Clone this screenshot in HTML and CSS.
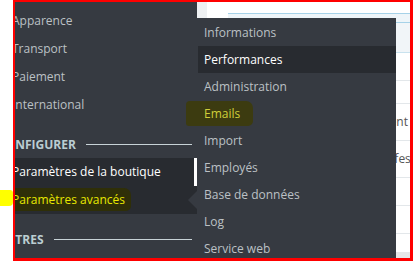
FILE: index.html
```html
<!DOCTYPE html>
<html>
<head>
  <meta name="viewport" content="width=device-width, initial-scale=1.0">
  <title>Paramètres avancés</title>
  <link rel="stylesheet" href="styles.css">
</head>
<body>
  <div class="shot">
    <div class="gutter"><span class="marker"></span></div>
    <div class="screen">
      <nav class="sidebar">
        <div class="sidebar-inner">
          <ul class="menu">
            <li class="item">Apparence</li>
            <li class="item">Transport</li>
            <li class="item">Paiement</li>
            <li class="item">International</li>
          </ul>
          <div class="section">Configurer</div>
          <ul class="menu">
            <li class="item item-current">Paramètres de la boutique</li>
            <li class="item item-open"><span class="hl hl-dark">Paramètres avancés</span></li>
          </ul>
          <div class="section">Autres</div>
        </div>
      </nav>

      <main class="content">
        <div class="strip"></div>
        <div class="spacer"></div>
        <div class="panel">
          <div class="panel-head"></div>
          <div class="row row-tint"></div>
          <div class="row row-a"></div>
          <div class="row row-b"></div>
          <div class="row row-text row-end">Mode de paiement</div>
          <div class="row row-text row-start">Profession</div>
          <div class="row row-a"></div>
          <div class="row row-a"></div>
          <div class="panel-foot"></div>
        </div>
      </main>

      <ul class="flyout">
        <li class="sub">Informations</li>
        <li class="sub sub-active">Performances</li>
        <li class="sub">Administration</li>
        <li class="sub"><span class="hl hl-mid">Emails</span></li>
        <li class="sub">Import</li>
        <li class="sub">Employés</li>
        <li class="sub">Base de données</li>
        <li class="sub">Log</li>
        <li class="sub">Service web</li>
      </ul>
    </div>
  </div>
</body>
</html>
```

FILE: styles.css
```css
body {
  margin: 0;
  background-color: #ffffff;
  font-family: 'Open Sans', 'Noto Sans', sans-serif;
  font-size: 12px;
}
ul {
  list-style: none;
  margin: 0;
  padding: 0;
}
.shot {
  display: flex;
  width: 413px;
  height: 261px;
  overflow: hidden;
}
.gutter {
  width: 13px;
  flex-shrink: 0;
  padding-top: 190px;
}
.marker {
  display: block;
  height: 16px;
  background-color: #ffff00;
  border-radius: 0 3px 4px 0;
}
.screen {
  position: relative;
  display: flex;
  width: 395px;
  height: 256px;
  flex-shrink: 0;
  border: solid #ff0000;
  border-width: 2px 3px 3px 2px;
  overflow: hidden;
}

/* sidebar */
.sidebar {
  width: 182px;
  flex-shrink: 0;
  background-color: #363a41;
  overflow: hidden;
}
.sidebar-inner {
  margin-left: -31px;
  padding-top: 5px;
}
.item {
  position: relative;
  height: 28px;
  line-height: 28px;
  padding-left: 28px;
  color: #bcc1c5;
  white-space: nowrap;
}
.item-current {
  background-color: #282b30;
  color: #ffffff;
  box-shadow: inset -3px 0 0 #ffffff;
}
.item-open {
  background-color: #282b30;
}
.item-open::after {
  content: '';
  position: absolute;
  right: 0;
  top: 5px;
  border-right: 9px solid #363a41;
  border-top: 9px solid transparent;
  border-bottom: 9px solid transparent;
}
.section {
  display: flex;
  align-items: center;
  gap: 10px;
  margin-top: 12px;
  height: 27px;
  padding-left: 14px;
  padding-right: 5px;
  color: #bbcdd2;
  font-weight: bold;
  text-transform: uppercase;
}
.section::after {
  content: '';
  flex: 1;
  height: 1px;
  background-color: #c8d3d7;
}

/* yellow highlighter marks */
.hl {
  padding: 3px 6px 3px 3px;
  margin-left: -3px;
  border-radius: 4px 7px 5px 3px;
}
.hl-dark {
  background-color: #2f2f08;
  color: #e8e800;
}
.hl-mid {
  background-color: #3c3b10;
  color: #cfcf3a;
  padding: 4px 13px 4px 18px;
  margin-left: -18px;
}

/* page behind the menu */
.content {
  flex: 1;
  min-width: 0;
  display: flex;
  background-color: #ffffff;
}
.strip {
  width: 10px;
  flex-shrink: 0;
  background-color: #eef0f2;
}
.spacer {
  width: 21px;
  flex-shrink: 0;
}
.panel {
  flex: 1;
  min-width: 0;
  overflow: hidden;
  margin-top: 11px;
}
.panel-head {
  height: 8px;
  background-color: #eef5f9;
  border-top: 1px solid #a6d2e8;
  border-bottom: 1px solid #a6d2e8;
}
.row {
  height: 36px;
  border-bottom: 1px solid #e3e7ea;
  color: #555555;
  line-height: 36px;
  white-space: nowrap;
}
.row-tint {
  height: 29px;
  background-color: #f1f5f8;
  border-bottom-color: #c9e2ee;
}
.row-a {
  height: 27px;
}
.row-b {
  height: 22px;
}
.row-end {
  text-align: right;
  padding-right: 2px;
}
.row-start {
  padding-left: 147px;
}
.panel-foot {
  height: 40px;
  margin-top: 18px;
  background-color: #e6e7e8;
}

/* flyout submenu */
.flyout {
  position: absolute;
  left: 182px;
  top: 16px;
  width: 198px;
  padding: 1px 0 0 1px;
  background-color: #363a41;
}
.sub {
  height: 27px;
  line-height: 27px;
  padding-left: 6px;
  color: #bcc1c5;
  white-space: nowrap;
}
.sub-active {
  background-color: #282b30;
  color: #ffffff;
}
```
